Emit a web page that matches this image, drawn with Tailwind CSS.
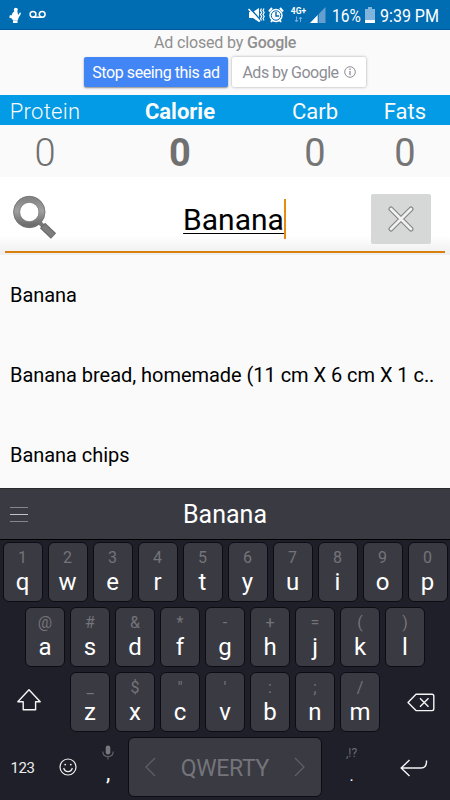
<!DOCTYPE html>
<html lang="en">
<head>
<meta charset="utf-8">
<title>Food search</title>
<script src="https://cdn.jsdelivr.net/npm/@tailwindcss/browser@4"></script>
</head>
<body class="w-[450px] h-[800px] overflow-hidden bg-[#fafafa] font-[Roboto,sans-serif] flex flex-col">

<!-- Status bar -->
<header class="h-[30px] shrink-0 bg-[#006db3] border-b border-[#0057a0] flex items-center text-white">
  <svg class="ml-2 w-[14px] h-[18px]" viewBox="0 0 14 18" fill="#fff"><circle cx="7.800" cy="3.700" r="2"/><path d="M6.500 5h2.800l.8 4 1.600-2.200 1.200-.3-.3 2L10.700 11.500l-1 3H5L3.800 12.500 1.200 11.500 2 9l1.500.5 1-2.500z"/><path d="M5 14.500h4.500V17H5z"/></svg>
  <svg class="ml-[7px] w-[18px] h-[10px]" viewBox="0 0 18 10" fill="none" stroke="#fff" stroke-width="1.500"><circle cx="4" cy="4.300" r="2.900"/><circle cx="13.200" cy="4.300" r="2.900"/><path d="M4 7.200h9.200"/></svg>
  <div class="flex-1"></div>
  <svg class="w-[18px] h-[18px]" viewBox="0 0 18 18"><path d="M1 6h4l6-4v14L5 12H1z" fill="#fff"/><path d="M1.800 2.200l11 12" stroke="#006db3" stroke-width="1.500"/><path d="M.5 3L12 15.500" stroke="#fff" stroke-width="1.500"/><path d="M13.500 2.500l-1 2 1.200 2-1.200 2 1.200 2-1.200 2 1 2M16 2.500l-1 2 1.200 2-1.200 2 1.200 2-1.200 2 1 2" fill="none" stroke="#fff" stroke-width="1.200"/></svg>
  <svg class="ml-[2px] w-[16px] h-[16px]" viewBox="0 0 16 16"><circle cx="8" cy="8.500" r="6.700" fill="#fff"/><path d="M1 4.500L4 1M15 4.500L12 1M3 15l1.500-2M13 15l-1.500-2" stroke="#fff" stroke-width="2"/><circle cx="8" cy="8.500" r="4.700" fill="none" stroke="#006db3" stroke-width="1"/><path d="M8 5v4h3.200" fill="none" stroke="#006db3" stroke-width="1.400"/></svg>
  <div class="ml-[6px] w-[17px] flex flex-col items-center">
    <span class="text-[8.500px] leading-[9px] font-bold">4G+</span>
    <svg class="w-[9px] h-[7px]" viewBox="0 0 9 7" fill="none" stroke="#77addb" stroke-width="1"><path d="M2.500 .5v5M1 4l1.500 2L4 4M6.500 6V1M5 3l1.500-2L8 3"/></svg>
  </div>
  <svg class="ml-[3px] w-[16px] h-[16px]" viewBox="0 0 16 16"><path d="M15.500 0v16H0z" fill="#649fd0"/><path d="M8 7.800V16H0z" fill="#fff"/><path d="M8.200 7v9" stroke="#006db3" stroke-width="1"/></svg>
  <span class="ml-[6px] w-[30px] text-[18px] leading-[20px] pt-[2px]"><span class="inline-block origin-left scale-x-[0.860]">16%</span></span>
  <svg class="ml-[3px] w-[10px] h-[16px]" viewBox="0 0 10 16"><path d="M3 0h4v2h3v14H0V2h3z" fill="#80b4dc"/><path d="M0 13h10v3H0z" fill="#fff"/></svg>
  <span class="ml-[5px] w-[70px] text-[18px] leading-[20px] pt-[2px] whitespace-nowrap"><span class="inline-block origin-left scale-x-[0.890]">9:39 PM</span></span>
</header>

<!-- Ad notice -->
<section class="h-[65px] shrink-0 flex flex-col items-center">
  <p class="h-[27px] pt-[3px] text-[16px] leading-[20px] tracking-[-0.150px] text-[#8f8f8f] whitespace-nowrap">Ad closed by <span class="font-medium tracking-[-0.300px]">Google</span></p>
  <div class="flex gap-[4px]">
    <button class="w-[144px] h-[30px] rounded-[2px] bg-[#4285f4] text-white text-[16px] leading-[31px] tracking-[-0.420px] shadow-[0_1px_2px_rgba(0,0,0,0.450)] whitespace-nowrap">Stop seeing this ad</button>
    <button class="w-[134px] h-[30px] rounded-[2px] bg-white text-[#8d8d95] text-[16px] leading-[31px] tracking-[-0.500px] shadow-[0_0_3px_rgba(0,0,0,0.350)] flex items-center justify-center gap-[5px] whitespace-nowrap">Ads by Google
      <svg class="w-[12px] h-[12px]" viewBox="0 0 12 12" fill="none" stroke="#8d8d95"><circle cx="6" cy="6" r="5.300"/><path d="M6 5v4.200M6 2.600v1.400" stroke-width="1.300"/></svg>
    </button>
  </div>
</section>

<!-- Macro totals -->
<section class="h-[82px] shrink-0 grid grid-cols-[90px_180px_90px_90px] grid-rows-[30px_52px] text-center text-[22px] leading-[34px] text-[#fafafa]">
  <div class="bg-[#039be5] font-light tracking-[0.300px]">Protein</div>
  <div class="bg-[#039be5] font-bold">Calorie</div>
  <div class="bg-[#039be5]">Carb</div>
  <div class="bg-[#039be5]">Fats</div>
  <div class="text-[38px] leading-[56px] text-[#707070] font-light">0</div>
  <div class="text-[38px] leading-[56px] text-[#707070] font-bold">0</div>
  <div class="text-[38px] leading-[56px] text-[#757575]">0</div>
  <div class="text-[38px] leading-[56px] text-[#757575]">0</div>
</section>

<!-- Search field -->
<section class="h-[78px] shrink-0 px-[5px] bg-linear-to-b from-white from-75% to-[#eeeeee] flex flex-col">
  <div class="h-[76px] border-b-[2px] border-[#d8800d] flex items-center pt-[9px]">
    <svg class="ml-[7px] -mt-[2px] w-[46px] h-[46px]" viewBox="0 0 46 46">
      <defs><linearGradient id="lens" x1="0" y1="0" x2="0" y2="1"><stop offset="0" stop-color="#858585"/><stop offset=".45" stop-color="#a0a0a0"/><stop offset="1" stop-color="#6d6d6d"/></linearGradient></defs>
      <path d="M28 28l4 4" stroke="#777" stroke-width="4"/>
      <path d="M30.500 30.500l11 10.500" stroke="#656565" stroke-width="7.500"/>
      <path d="M31 31l10 9.500" stroke="#7d7d7d" stroke-width="5.500"/>
      <circle cx="17.300" cy="17" r="12.700" fill="none" stroke="url(#lens)" stroke-width="6.400"/>
      <circle cx="17.300" cy="17" r="15.700" fill="none" stroke="#747474" stroke-width=".8"/>
      <circle cx="17.300" cy="17" r="9.700" fill="none" stroke="#808080" stroke-width=".8"/>
    </svg>
    <div class="flex-1 flex justify-center items-center pl-[40px]">
      <span class="pt-[2px] text-[30px] leading-[36px] text-black underline decoration-[1px] underline-offset-[3px]">Banana</span>
      <span class="w-[2px] h-[40px] bg-[#e88b10]"></span>
    </div>
    <button class="mr-[14px] w-[60px] h-[50px] rounded-[2px] bg-[#d6d7d7] flex items-center justify-center">
      <svg class="w-[26px] h-[26px]" viewBox="0 0 26 26" stroke-linecap="round"><path d="M3 3l20 20M23 3L3 23" stroke="#858585" stroke-width="5"/><path d="M3 3l20 20M23 3L3 23" stroke="#f1f1f1" stroke-width="2.800"/></svg>
    </button>
  </div>
</section>

<!-- Results -->
<ul class="h-[233px] shrink-0 text-[20px] leading-[80px] tracking-[-0.040px] text-black overflow-hidden">
  <li class="h-[80px] px-[10px]">Banana</li>
  <li class="h-[80px] px-[10px] whitespace-nowrap">Banana bread, homemade (11 cm X 6 cm X 1 c..</li>
  <li class="h-[80px] px-[10px]">Banana chips</li>
</ul>

<!-- Suggestion strip -->
<div class="h-[52px] shrink-0 border-t border-t-[#29292e] border-b border-b-black bg-[#3a3a42] grid grid-cols-[60px_1fr_60px] items-center">
  <svg class="ml-[10px] mt-[2px] w-[18px] h-[16px]" viewBox="0 0 18 16" stroke-width="1"><path d="M0 .5h18M0 14.500h18" stroke="#85858a"/><path d="M0 7.500h18" stroke="#c2c2ce"/></svg>
  <span class="pt-[2px] text-center text-[25px] leading-[48px] text-white">Banana</span>
</div>

<!-- Keyboard -->
<main class="h-[260px] shrink-0 bg-[#1e1f29] pt-[2px] flex flex-col gap-[5px]">
  <div class="h-[60px] flex justify-center gap-[5px]" data-keys="1q 2w 3e 4r 5t 6y 7u 8i 9o 0p"></div>
  <div class="h-[60px] flex justify-center gap-[5px]" data-keys="@a #s &amp;d *f -g +h =j (k )l"></div>
  <div class="h-[60px] flex">
    <div class="w-[70px] pl-[17px] pt-[17px]">
      <svg class="w-[24px] h-[22px]" viewBox="0 0 24 22" fill="none" stroke="#f5f5f5" stroke-width="1.400" stroke-linejoin="round"><path d="M12 .8L23.200 12.800H18.600V20.800H6.200V12.800H.8z"/></svg>
    </div>
    <div class="flex gap-[5px]" data-keys="_z $x &quot;c 'v :b ;n /m"></div>
    <div class="flex-1 pl-[27px] pt-[21px]">
      <svg class="w-[28px] h-[19px]" viewBox="0 0 28 19" fill="none" stroke="#f5f5f5" stroke-width="1.400" stroke-linejoin="round"><path d="M9 1.200h16q1.800 0 1.800 1.800v12.800q0 1.800-1.800 1.800H9L1 9.400z"/><path d="M13 5.200l8.500 8.500M21.500 5.200L13 13.700"/></svg>
    </div>
  </div>
  <div class="h-[60px] flex text-white">
    <div class="w-[45px] text-center text-[15px] leading-[62px] tracking-[-0.400px] text-[#ececec]">123</div>
    <div class="w-[45px] flex justify-center items-center">
      <svg class="w-[18px] h-[18px]" viewBox="0 0 18 18" fill="none" stroke="#f0f0f0" stroke-width="1.200"><circle cx="9" cy="9" r="8"/><path d="M4.700 10q.8 3.600 4.300 3.600T13.300 10"/><circle cx="6.200" cy="6.600" r=".9" fill="#f0f0f0" stroke="none"/><circle cx="11.800" cy="6.600" r=".9" fill="#f0f0f0" stroke="none"/></svg>
    </div>
    <div class="w-[38px] pl-[12px] pt-[8px]">
      <svg class="w-[12px] h-[16px]" viewBox="0 0 12 16"><rect x="3.700" y=".5" width="4.600" height="9" rx="2.300" fill="#77777c"/><path d="M.8 6.500q0 5 5.200 5t5.200-5M6 11.500v3" fill="none" stroke="#66666c" stroke-width="1.100"/></svg>
      <div class="pl-[4px] text-[22px] leading-[28px] -mt-[2px]">,</div>
    </div>
    <div class="w-[194px] rounded-[6px] border-[1.500px] border-[#0c0c12] bg-[#3a3a42] flex items-center justify-between px-[16px] text-[23px] leading-[28px] text-[#74747a]">
      <svg class="w-[11px] h-[20px]" viewBox="0 0 11 20" fill="none" stroke="#606066" stroke-width="1.200"><path d="M10 1L1 10l9 9"/></svg>
      <span class="pt-[3px] tracking-[-0.300px]">QWERTY</span>
      <svg class="w-[11px] h-[20px]" viewBox="0 0 11 20" fill="none" stroke="#606066" stroke-width="1.200"><path d="M1 1l9 9-9 9"/></svg>
    </div>
    <div class="w-[59px] pt-[8px] text-center">
      <div class="text-[12px] leading-[16px] text-[#6c6c72]">,!?</div>
      <div class="text-[16px] leading-[30px]">.</div>
    </div>
    <div class="flex-1 pl-[19px] pt-[22px]">
      <svg class="w-[28px] h-[18px]" viewBox="0 0 28 18" fill="none" stroke="#f5f5f5" stroke-width="1.400"><path d="M9.500 1L1.200 9l8.300 8M1.200 9H21q5.500 0 5.500-6.500V1.500"/></svg>
    </div>
  </div>
</main>

<template id="key">
  <div class="w-[40px] h-[60px] rounded-[6px] border border-[#0c0c12] bg-[#3a3a42] pt-[5px] text-center">
    <div class="text-[16px] leading-[20px] text-[#74747a]"></div>
    <div class="text-[24px] leading-[28px] text-white"></div>
  </div>
</template>
<script>
  const key = document.getElementById('key').content.firstElementChild;
  for (const row of document.querySelectorAll('[data-keys]')) {
    for (const pair of row.dataset.keys.split(' ')) {
      const k = key.cloneNode(true);
      k.children[0].textContent = pair[0];
      k.children[1].textContent = pair[1];
      row.append(k);
    }
  }
</script>
</body>
</html>
